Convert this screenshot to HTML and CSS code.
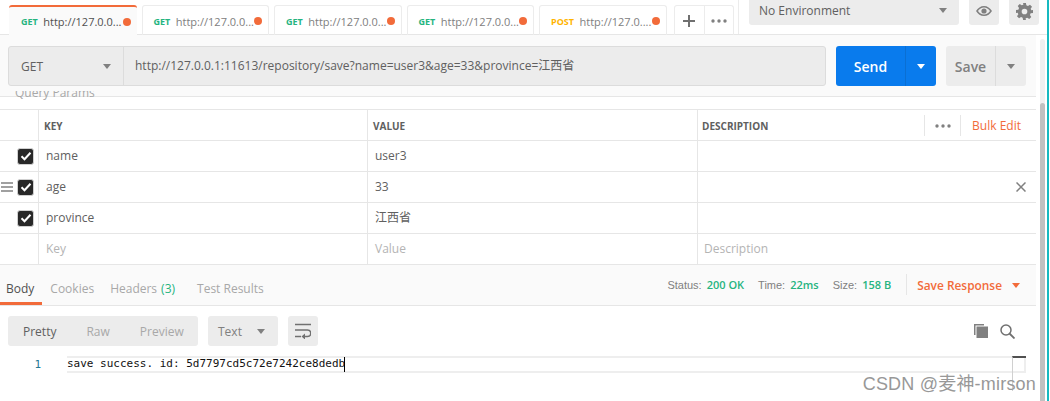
FILE: index.html
```html
<!DOCTYPE html>
<html>
<head>
<meta charset="utf-8">
<title>Postman</title>
<link rel="stylesheet" href="styles.css">
</head>
<body>
<div class="app">
  <div class="main">
    <div class="tabbar">
      <div class="tab active"><b class="get">GET</b><span class="tab-url">http://127.0.0...</span><i class="dot"></i></div>
      <div class="tab"><b class="get">GET</b><span class="tab-url">http://127.0.0...</span><i class="dot"></i></div>
      <div class="tab"><b class="get">GET</b><span class="tab-url">http://127.0.0...</span><i class="dot"></i></div>
      <div class="tab"><b class="get">GET</b><span class="tab-url">http://127.0.0...</span><i class="dot"></i></div>
      <div class="tab"><b class="post">POST</b><span class="tab-url">http://127.0....</span><i class="dot"></i></div>
      <div class="tab-tools">
        <div class="tab-tool">
          <svg width="12" height="12" viewBox="0 0 12 12"><path d="M5 0h2v5h5v2H7v5H5V7H0V5h5z" fill="#707070"/></svg>
        </div>
        <div class="tab-tool">
          <svg width="16" height="4" viewBox="0 0 16 4"><circle cx="2" cy="2" r="1.7" fill="#808080"/><circle cx="8" cy="2" r="1.7" fill="#808080"/><circle cx="14" cy="2" r="1.7" fill="#808080"/></svg>
        </div>
      </div>
      <div class="env-area">
        <div class="env-select"><span>No Environment</span><i class="caret"></i></div>
        <div class="env-btn">
          <svg width="16" height="10" viewBox="0 0 16 10"><path d="M8 0c3.400 0 6.200 2 8 5-1.800 3-4.600 5-8 5S1.800 8 0 5c1.800-3 4.600-5 8-5zm0 1.500C5.600 1.500 3.500 2.800 2 5c1.500 2.200 3.600 3.500 6 3.500s4.500-1.300 6-3.500c-1.500-2.200-3.600-3.500-6-3.500z" fill="#808080"/><circle cx="8" cy="5" r="2.600" fill="#808080"/></svg>
        </div>
        <div class="env-btn">
          <svg width="17" height="17" viewBox="0 0 24 24"><path d="M10 0h4l.6 3.300 2.300 1 2.800-1.900 2.900 2.900-1.900 2.800 1 2.300L24 10v4l-3.300.6-1 2.300 1.900 2.800-2.900 2.900-2.800-1.900-2.300 1L14 24h-4l-.6-3.300-2.300-1-2.800 1.900-2.900-2.900 1.900-2.800-1-2.300L0 14v-4l3.300-.6 1-2.300-1.900-2.800 2.900-2.900 2.800 1.900 2.300-1zM12 8a4 4 0 1 0 0 8 4 4 0 0 0 0-8z" fill="#808080"/></svg>
        </div>
      </div>
    </div>

    <div class="request-bar">
      <div class="url-group">
        <div class="method"><span>GET</span><i class="caret"></i></div>
        <div class="url">http://127.0.0.1:11613/repository/save?name=user3&amp;age=33&amp;province=江西省</div>
      </div>
      <div class="split send"><span class="split-main">Send</span><span class="split-arrow"><i class="caret white"></i></span></div>
      <div class="split save"><span class="split-main">Save</span><span class="split-arrow"><i class="caret"></i></span></div>
    </div>

    <div class="params-title"><span>Query Params</span></div>

    <div class="params">
      <div class="row head">
        <div class="cell check"></div>
        <div class="cell key">KEY</div>
        <div class="cell value">VALUE</div>
        <div class="cell desc">
          <span>DESCRIPTION</span>
          <span class="head-tools">
            <span class="head-dots"><svg width="16" height="4" viewBox="0 0 16 4"><circle cx="2" cy="2" r="1.700" fill="#808080"/><circle cx="8" cy="2" r="1.700" fill="#808080"/><circle cx="14" cy="2" r="1.700" fill="#808080"/></svg></span>
            <span class="bulk">Bulk Edit</span>
          </span>
        </div>
      </div>
      <div class="row">
        <div class="cell check"><span class="box"><svg width="12" height="10" viewBox="0 0 12 10"><path d="M1.500 5.200l3 3 6-6.500" fill="none" stroke="#fff" stroke-width="2"/></svg></span></div>
        <div class="cell key">name</div>
        <div class="cell value">user3</div>
        <div class="cell desc"></div>
      </div>
      <div class="row">
        <div class="cell check">
          <span class="drag"><i></i><i></i><i></i></span>
          <span class="box"><svg width="12" height="10" viewBox="0 0 12 10"><path d="M1.500 5.200l3 3 6-6.500" fill="none" stroke="#fff" stroke-width="2"/></svg></span>
        </div>
        <div class="cell key">age</div>
        <div class="cell value">33</div>
        <div class="cell desc">
          <svg class="remove" width="10" height="10" viewBox="0 0 10 10"><path d="M.5.500l9 9M9.500.500l-9 9" stroke="#808080" stroke-width="1.500"/></svg>
        </div>
      </div>
      <div class="row">
        <div class="cell check"><span class="box"><svg width="12" height="10" viewBox="0 0 12 10"><path d="M1.500 5.200l3 3 6-6.500" fill="none" stroke="#fff" stroke-width="2"/></svg></span></div>
        <div class="cell key">province</div>
        <div class="cell value">江西省</div>
        <div class="cell desc"></div>
      </div>
      <div class="row empty">
        <div class="cell check"></div>
        <div class="cell key">Key</div>
        <div class="cell value">Value</div>
        <div class="cell desc">Description</div>
      </div>
    </div>

    <div class="resp-bar">
      <div class="resp-tabs">
        <span class="resp-tab active">Body</span>
        <span class="resp-tab">Cookies</span>
        <span class="resp-tab">Headers <em>(3)</em></span>
        <span class="resp-tab">Test Results</span>
      </div>
      <div class="resp-meta">
        <span class="meta">Status: <em>200 OK</em></span>
        <span class="meta">Time: <em>22ms</em></span>
        <span class="meta">Size: <em>158 B</em></span>
        <span class="save-resp">Save Response<i class="caret orange"></i></span>
      </div>
    </div>

    <div class="toolbar">
      <div class="pill modes"><span class="on">Pretty</span><span>Raw</span><span>Preview</span></div>
      <div class="pill format"><span>Text</span><i class="caret"></i></div>
      <div class="pill wrap">
        <svg width="16" height="16" viewBox="0 0 16 16"><path d="M0 1.500h16M0 7h12.500a3 3 0 0 1 0 6.500H9M0 13.500h6" fill="none" stroke="#707070" stroke-width="1.500"/><path d="M10 10.500v6l-3.500-3z" fill="#707070"/></svg>
      </div>
      <div class="tool-icons">
        <svg width="14" height="14" viewBox="0 0 14 14"><path d="M0 0h10v1.500H1.500V11H0z" fill="#808080"/><rect x="2.500" y="2.500" width="11.500" height="11.500" fill="#808080"/></svg>
        <svg width="15" height="15" viewBox="0 0 15 15"><circle cx="6" cy="6" r="5" fill="none" stroke="#707070" stroke-width="1.500"/><path d="M9.500 9.500l5 5" stroke="#707070" stroke-width="1.800"/></svg>
      </div>
    </div>

    <div class="code">
      <div class="gutter">1</div>
      <div class="code-line"><span class="code-text">save success. id: 5d7797cd5c72e7242ce8dedb</span><i class="cursor"></i></div>
      <div class="minimap"></div>
      <div class="watermark">CSDN @麦神-mirson</div>
    </div>
  </div>

  <div class="scrollbar"><div class="track"><div class="thumb"></div></div></div>
  <div class="edge"></div>
</div>
</body>
</html>
```

FILE: styles.css
```css
* { box-sizing: border-box; }
html, body { margin: 0; padding: 0; }
body { width: 1050px; height: 401px; overflow: hidden; background: #fff; color: #505050; font-family: "Open Sans", "Noto Sans CJK SC", sans-serif; font-size: 12px; }
i, em { font-style: normal; }
.app { display: flex; height: 401px; }
.main { width: 1036px; flex: none; }

.caret { display: block; width: 0; height: 0; border-left: 4px solid transparent; border-right: 4px solid transparent; border-top: 5px solid #808080; }
.caret.white { border-top-color: #fff; }
.caret.orange { border-top-color: #f26b3a; }

/* tabs */
.tabbar { display: flex; height: 35px; width: 1047px; padding-left: 9px; border-bottom: 1px solid #e6e6e6; }
.tab { display: flex; align-items: center; width: 127.500px; height: 30px; margin: 5px 5px 0 0; padding: 1px 6px 0 11px; border: 1px solid #ececec; border-bottom: 0; border-radius: 3px 3px 0 0; font-size: 11px; color: #808080; white-space: nowrap; }
.tab b { font-size: 9px; font-weight: 700; margin-right: 5.500px; }
.tab .get { color: #26b47f; }
.tab .post { color: #ffb400; }
.tab-url { flex: 1; overflow: hidden; }
.dot { width: 8px; height: 8px; border-radius: 50%; background: #f26b3a; }
.tab.active { height: 31px; border: 0; border-top: 2px solid #f26b3a; background: #fafafa; color: #505050; padding: 0 6px 0 12px; }
.tab-tools { display: flex; height: 30px; margin: 5px 0 0 2.500px; border: 1px solid #ececec; border-bottom: 0; border-radius: 3px 3px 0 0; }
.tab-tool { display: flex; align-items: center; justify-content: center; width: 29px; padding: 1px 1px 0 0; }
.tab-tool + .tab-tool { border-left: 1px solid #ececec; }
.env-area { display: flex; width: 305px; height: 34px; margin-left: 4px; padding-left: 10px; border-left: 1px solid #ececec; }
.env-select { display: flex; align-items: center; justify-content: space-between; width: 210px; height: 25px; padding: 0 12px 4px 10px; background: #ececec; border-radius: 0 0 3px 3px; font-size: 12px; color: #606060; }
.env-btn { display: flex; align-items: center; justify-content: center; width: 30px; height: 25px; margin-left: 10px; padding-bottom: 3px; background: #ececec; border-radius: 0 0 3px 3px; }

/* request */
.request-bar { display: flex; height: 62px; padding: 11px 0 0 8px; background: #fafafa; border-bottom: 1px solid #e6e6e6; }
.url-group { display: flex; width: 818px; height: 40px; background: #ececec; border: 1px solid #dcdcdc; border-radius: 3px; font-size: 12px; }
.method { display: flex; align-items: center; justify-content: space-between; width: 115px; padding: 0 12px 0 12px; border-right: 1px solid #dcdcdc; color: #606060; }
.url { flex: 1; padding-left: 11px; line-height: 38px; color: #606060; white-space: nowrap; font-size: 12px; }
.split { display: flex; height: 40px; border-radius: 3px; font-size: 14px; font-weight: 600; }
.split-main { display: flex; align-items: center; justify-content: center; }
.split-arrow { display: flex; align-items: center; justify-content: center; }
.send { width: 100px; margin-left: 10px; background: #097bed; color: #fff; }
.send .split-main { width: 69px; }
.send .split-arrow { width: 31px; border-left: 1px solid #0a6fd3; }
.save { width: 80px; margin-left: 10px; background: #ececec; color: #808080; }
.save .split-main { width: 49px; }
.save .split-arrow { width: 31px; border-left: 1px solid #dcdcdc; }

/* params table */
.params-title { height: 18px; margin-top: -6px; overflow: hidden; padding-left: 15px; font-size: 12px; color: #a8a8a8; line-height: 16px; }
.params-title span { display: block; margin-top: -6px; }
.params { border-top: 1px solid #e6e6e6; border-bottom: 1px solid #e6e6e6; }
.row { display: flex; height: 31px; border-top: 1px solid #e6e6e6; }
.row:first-child { border-top: 0; height: 30px; }
.cell { display: flex; align-items: center; padding: 0 0 2px 7px; font-size: 12px; color: #606060; }
.check { width: 39px; justify-content: flex-end; padding: 0 4px 0 0; border-right: 1px solid #e6e6e6; position: relative; }
.key { width: 329px; border-right: 1px solid #e6e6e6; }
.value { width: 330px; border-right: 1px solid #e6e6e6; }
.desc { flex: 1; justify-content: space-between; padding-left: 6px; padding-right: 10px; }
.head .cell { font-size: 10px; font-weight: 700; color: #606060; padding: 1px 0 0 5px; }
.head .desc { padding-left: 4px; padding-right: 15px; }
.head-tools { display: flex; align-items: center; height: 21px; }
.head-dots { display: flex; align-items: center; width: 37px; height: 21px; padding-left: 10px; border-left: 1px solid #e6e6e6; border-right: 1px solid #e6e6e6; }
.bulk { padding-left: 11px; font-size: 12px; font-weight: 400; color: #f26b3a; }
.empty .cell { color: #b4b4b4; }
.box { display: flex; align-items: center; justify-content: center; width: 17px; height: 17px; background: #282828; border: 1px solid #d0d0d0; border-radius: 3px; }
.drag { position: absolute; left: 1px; top: 10px; display: flex; flex-direction: column; gap: 2px; width: 12px; }
.drag i { display: block; height: 2px; background: #a0a0a0; }
.remove { margin-left: auto; margin-top: 2px; }

/* response */
.resp-bar { display: flex; justify-content: space-between; height: 41px; background: #fafafa; border-bottom: 1px solid #e6e6e6; }
.resp-tabs { display: flex; }
.resp-tab { display: flex; align-items: center; height: 40px; padding: 6px 8px 0; font-size: 12px; color: #a8a8a8; white-space: nowrap; }
.resp-tab em { color: #26b47f; margin-left: 4px; }
.resp-tab:nth-child(4) { margin-left: 6px; }
.resp-tab.active { padding: 6px 8px 0 6px; color: #505050; box-shadow: inset 0 -3px 0 #f26b3a; }
.resp-meta { display: flex; align-items: center; height: 40px; padding: 0 16px 1px 0; font-size: 11px; color: #808080; }
.meta { margin-left: 14px; font-family: "Liberation Sans", sans-serif; }
.meta em { margin-left: 2px; color: #26b47f; font-weight: 600; font-family: "Open Sans", sans-serif; }
.save-resp { display: flex; align-items: center; height: 21px; margin-left: 15px; padding-left: 10px; border-left: 1px solid #e6e6e6; font-size: 11.900px; color: #f26b3a; font-weight: 600; }
.save-resp .caret { margin-left: 10px; margin-top: 2px; }

.toolbar { display: flex; height: 30px; margin-top: 10px; padding: 0 8px; }
.pill { display: flex; align-items: center; height: 30px; background: #ececec; border-radius: 3px; font-size: 12px; color: #a8a8a8; }
.modes { width: 190px; padding-left: 15px; gap: 30px; }
.modes .on { color: #606060; }
.format { width: 70px; margin-left: 10px; padding: 0 13px 0 10px; justify-content: space-between; color: #808080; }
.wrap { width: 30px; margin-left: 10px; justify-content: center; }
.tool-icons { display: flex; align-items: center; gap: 12px; margin-left: auto; padding-right: 13px; }

/* code area */
.code { display: flex; position: relative; height: 45px; padding-top: 10px; }
.gutter { width: 67px; padding: 2px 26px 0 0; text-align: right; font: 11px/14px "DejaVu Sans Mono", monospace; color: #237893; }
.code-line { display: flex; width: 959px; height: 17px; border-top: 2px solid #eeeeee; border-bottom: 2px solid #eeeeee; border-right: 2px solid #eeeeee; font: 11px/12px "DejaVu Sans Mono", monospace; color: #111; }
.code-text { white-space: pre; }
.cursor { width: 1px; margin-left: -1px; background: #000; height: 15px; margin-top: -1px; }
.minimap { width: 14px; margin-left: -14px; border-top: 2px solid #505050; border-left: 1px solid #d0d0d0; }
.watermark { position: absolute; right: 0; top: 23px; font-family: "Liberation Sans", "Noto Sans CJK SC", sans-serif; font-size: 18px; letter-spacing: .2px; color: #989898; white-space: nowrap; }

/* right edge */
.scrollbar { width: 11px; padding: 39px 2px 0 4px; }
.track { display: flex; flex-direction: column; height: 100%; padding-top: 64px; background: #f0f0f0; border-radius: 3px 3px 0 0; }
.thumb { flex: 1; background: #c1c1c1; border-radius: 3px 3px 0 0; }
.edge { flex: none; width: 3px; background: linear-gradient(90deg, #17b9c0 0 2px, #fff 2px); }
```
